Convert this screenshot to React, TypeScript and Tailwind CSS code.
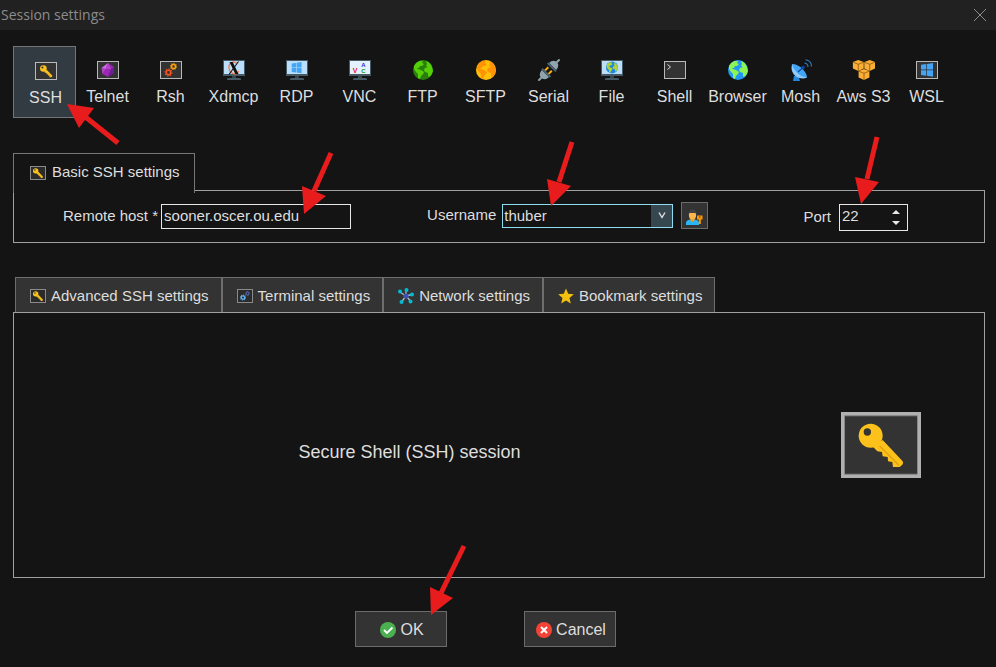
import { useState } from "react";
import type { ReactNode } from "react";

const KeyShape = () => (
  <>
    <circle cx="89" cy="71" r="36" fill="#fcc21b" />
    <path
      d="M125 84 185 148Q188 153 184 158L176 165H156L154 150 141 148 140 135 125 133 123 120 109 118 97 106Z"
      fill="#fcc21b"
    />
    <path d="M116 102 174 160" stroke="#e2a610" strokeWidth="5" />
    <circle cx="79" cy="60" r="11" fill="#333" />
  </>
);

const Frame = () => (
  <rect x="0.5" y="2.5" width="21" height="17" fill="#333" stroke="#b9b9b9" />
);

const Gear = ({
  x,
  y,
  r,
  color,
}: {
  x: number;
  y: number;
  r: number;
  color: string;
}) => (
  <g fill="none" stroke={color}>
    <circle cx={x} cy={y} r={r * 0.62} strokeWidth={r * 0.45} />
    <circle
      cx={x}
      cy={y}
      r={r * 0.9}
      strokeWidth={r * 0.4}
      pathLength={16}
      strokeDasharray="1 1"
    />
  </g>
);

const Monitor = ({ children }: { children: ReactNode }) => (
  <>
    <rect y="1" width="22" height="16" fill="#455a64" />
    <rect x="1" y="2" width="20" height="13" fill="#bbdefb" />
    <path d="M9 17h4v2h-4z" fill="#37474f" />
    <path d="M4 21v-1q0-1 2-1h10q2 0 2 1v1z" fill="#455a64" />
    {children}
  </>
);

const Globe = ({ sea, land }: { sea: string; land: string }) => (
  <>
    <circle cx="11" cy="11" r="10" fill={sea} />
    <path
      d="M2 7Q4 3 8 2L11 2 10 4 12 5 10 7 8 7 7 9 5 9 6 10 9 11 12 13 11 15 9 17 8 20 6 19 6 15 4 13 2 10Z"
      fill={land}
    />
    <path
      d="M14 2Q18 3 20 8L21 12Q20 16 17 18L16 17 16 14 13 13 12 11 13 9 16 8 14 7 15 5Z"
      fill={land}
    />
  </>
);

const WindowsLogo = () => (
  <g fill="#42a5f5">
    <path d="M5 5.8 10.3 5v5.500H5zM11 4.900 17 4v6.500H11zM5 11.200H10.300v5.500L5 16zM11 11.200h6V17.700L11 16.800z" />
  </g>
);

const Cube = ({ x, y }: { x: number; y: number }) => (
  <g transform={`translate(${x} ${y})`}>
    <path d="M0-5.600 5.400-3.400V3L0 5.600-5.400 3V-3.400Z" fill="#faae35" />
    <path
      d="M-5-3.200 0-1.200 5-3.200M0-1.200V5.500"
      fill="none"
      stroke="#7a4a08"
      strokeWidth="0.7"
    />
  </g>
);

const sessions: { name: string; icon: ReactNode }[] = [
  {
    name: "SSH",
    icon: (
      <>
        <Frame />
        <g transform="translate(0.2 2) scale(0.092)">
          <KeyShape />
        </g>
      </>
    ),
  },
  {
    name: "Telnet",
    icon: (
      <>
        <Frame />
        <path d="M11 4 17 8 16.500 14 11 18 5.500 15 4.500 9Z" fill="#9c27b0" />
        <path d="M11 4 4.500 9 8.500 10Z" fill="#ce6fe0" />
        <path d="M8.500 10 4.500 9 5.500 15Z" fill="#ab47bc" />
        <path d="M11 4 8.500 10 14 10Z" fill="#b445cb" />
        <path d="M14 10 17 8 16.500 14 11 18Z" fill="#6a1b9a" />
      </>
    ),
  },
  {
    name: "Rsh",
    icon: (
      <>
        <Frame />
        <Gear x={8.5} y={13.500} r={3.6} color="#f4511e" />
        <Gear x={13.500} y={7.500} r={3.2} color="#ff9f0a" />
      </>
    ),
  },
  {
    name: "Xdmcp",
    icon: (
      <Monitor>
        <ellipse
          cx="11"
          cy="9"
          rx="6"
          ry="5"
          fill="none"
          stroke="#f47c48"
          strokeWidth="1.4"
          strokeDasharray="22 8"
          transform="rotate(70 11 9)"
        />
        <path d="M6.500 3h3.200L15.500 15h-3.200z" fill="#111" />
        <path d="M15.500 2.500 6 15.500" stroke="#111" strokeWidth="1.1" />
      </Monitor>
    ),
  },
  {
    name: "RDP",
    icon: (
      <Monitor>
        <g transform="translate(1.600 -0.200) scale(0.82)">
          <WindowsLogo />
        </g>
      </Monitor>
    ),
  },
  {
    name: "VNC",
    icon: (
      <Monitor>
        <rect x="1" y="2" width="20" height="13" fill="#e3f2fd" />
        <g
          fontFamily="Liberation Sans, sans-serif"
          fontWeight="bold"
          fontSize="7"
          textAnchor="middle"
        >
          <text x="6" y="14" fill="#f01818">
            V
          </text>
          <text x="14.500" y="7.500" fontSize="6" fill="#2828d8">
            A
          </text>
          <text x="14.500" y="14" fontSize="6" fill="#0a9a20">
            C
          </text>
        </g>
      </Monitor>
    ),
  },
  { name: "FTP", icon: <Globe sea="#2a7f0c" land="#55cf08" /> },
  { name: "SFTP", icon: <Globe sea="#ffc107" land="#ff9305" /> },
  {
    name: "Serial",
    icon: (
      <g transform="rotate(-45 11 11)">
        <path
          d="M-4 10H0Q1 6 6 6V16Q1 16 0 12H-4ZM26 10H22Q21 6 16 6V16Q21 16 22 12H26Z"
          fill="#90a4ae"
        />
        <path d="M6 5h2v12H6zM14 5h2v12h-2z" fill="#4a6572" />
        <path d="M8 7.500h4.500v2H8zM8 12.500h4.500v2H8z" fill="#ffb300" />
      </g>
    ),
  },
  {
    name: "File",
    icon: (
      <Monitor>
        <g transform="translate(4.400 2) scale(0.6)">
          <Globe sea="#1e88e5" land="#b5d334" />
        </g>
      </Monitor>
    ),
  },
  {
    name: "Shell",
    icon: (
      <>
        <Frame />
        <path d="m3.500 5.500 3 2.500-3 2.500" fill="none" stroke="#ddd" />
      </>
    ),
  },
  { name: "Browser", icon: <Globe sea="#2196f3" land="#8df456" /> },
  {
    name: "Mosh",
    icon: (
      <>
        <path d="M3 22 4 17 8 16 10 22Z" fill="#2489dc" />
        <path d="M2 5Q0 13 6 17.500 12 21 17 18.500Z" fill="#90caf9" />
        <path d="M2 5Q8 5 13 10.500 17 15 17 18.500 11 18 6.500 13 2.500 9 2 5Z" fill="#42a5f5" />
        <path d="M8 13 13 8.500" stroke="#0d47a1" strokeWidth="1.2" />
        <circle cx="13" cy="8.500" r="1.800" fill="#0d47a1" />
        <path
          d="M14.500 4Q18 4.500 18 8M15.500 0.800Q21.500 1.500 21.500 7.500"
          fill="none"
          stroke="#2c7fc4"
          strokeWidth="1.1"
        />
      </>
    ),
  },
  {
    name: "Aws S3",
    icon: (
      <>
        <Cube x={5.300} y={6.500} />
        <Cube x={16.700} y={6.500} />
        <Cube x={11} y={15.500} />
      </>
    ),
  },
  {
    name: "WSL",
    icon: (
      <>
        <Frame />
        <WindowsLogo />
      </>
    ),
  },
];

const SmallFrame = ({ children }: { children: ReactNode }) => (
  <svg width="16" height="14" viewBox="0 0 16 14" aria-hidden="true">
    <rect x="0.5" y="0.5" width="15" height="13" fill="#2b2b2b" stroke="#8a8a8a" />
    {children}
  </svg>
);

const KeyIcon = () => (
  <SmallFrame>
    <g transform="translate(-1 -0.500) scale(0.075)">
      <KeyShape />
    </g>
  </SmallFrame>
);

const tabs: { name: string; icon: ReactNode }[] = [
  { name: "Advanced SSH settings", icon: <KeyIcon /> },
  {
    name: "Terminal settings",
    icon: (
      <SmallFrame>
        <Gear x={6} y={8.500} r={2.8} color="#64b5f6" />
        <Gear x={10.500} y={4.500} r={2.2} color="#5c6bc0" />
      </SmallFrame>
    ),
  },
  {
    name: "Network settings",
    icon: (
      <svg width="16" height="16" viewBox="0 0 16 16" aria-hidden="true">
        <path
          d="M8 8V2M8 8 2 4M8 8l6-1.500M8 8l-4.500 6M8 8l4.500 5"
          stroke="#b0bec5"
          strokeWidth="1.300"
        />
        <g fill="#00bcd4">
          <circle cx="8.500" cy="2" r="2" />
          <circle cx="2" cy="3.500" r="2" />
          <circle cx="14" cy="6.500" r="2" />
          <circle cx="3.500" cy="14" r="2" />
          <circle cx="12.500" cy="13.500" r="2" />
        </g>
        <circle cx="8" cy="8" r="2.600" fill="#3f51b5" />
      </svg>
    ),
  },
  {
    name: "Bookmark settings",
    icon: (
      <svg width="16" height="16" viewBox="0 0 16 16" aria-hidden="true">
        <path
          d="m8 0.500 2.200 5.200 5.600.5-4.300 3.700 1.300 5.600L8 12.500l-4.800 3 1.300-5.600L.2 6.200l5.600-.5z"
          fill="#f4c20d"
        />
      </svg>
    ),
  },
];

const Arrow = ({
  head,
  tail,
  className,
}: {
  head: string;
  tail: string;
  className: string;
}) => (
  <svg
    width="56"
    height="72"
    viewBox="0 0 56 72"
    aria-hidden="true"
    className={`pointer-events-none absolute z-20 ${className}`}
  >
    <path d={tail} stroke="#e81c1c" strokeWidth="5" />
    <path d={head} fill="#e81c1c" />
  </svg>
);

export default function App() {
  const [session, setSession] = useState("SSH");
  const [port, setPort] = useState(22);

  return (
    <div className="min-h-screen bg-[#141414] font-['Liberation_Sans',Arial,sans-serif] text-base text-[#dedede]">
      <header className="flex h-[30px] items-center justify-between bg-[#212121] pr-2.5 pl-px">
        <h1 className="font-['Open_Sans',sans-serif] text-sm text-[#8c8c8c]">
          Session settings
        </h1>
        <button type="button" aria-label="Close">
          <svg width="12" height="12" viewBox="0 0 12 12">
            <path d="m0 0 12 12M12 0 0 12" stroke="#8c8c8c" />
          </svg>
        </button>
      </header>

      <main className="pt-4 pr-[11px] pb-5 pl-[13px]">
        <nav className="relative flex">
          {sessions.map(({ name, icon }) => (
            <button
              key={name}
              type="button"
              onClick={() => setSession(name)}
              className={`flex h-[72px] w-[63px] flex-col items-center gap-1.5 border leading-5 whitespace-nowrap ${
                session === name
                  ? "border-[#757575] bg-[#323a42] pt-[13px] pl-0.5"
                  : "border-transparent pt-3"
              }`}
            >
              <svg
                width="23"
                height="22"
                viewBox="-1 0 23 22"
                aria-hidden="true"
                className="shrink-0"
              >
                {icon}
              </svg>
              {name}
            </button>
          ))}
          <Arrow
            className="top-[54px] left-[52px]"
            head="M2 4 29 8 14 28Z"
            tail="M18 15 53 43"
          />
        </nav>

        <section className="mt-[35px]">
          <h2 className="relative z-10 mb-[-3px] flex h-10 w-fit items-center gap-1.5 border border-b-0 border-[#767676] bg-[#141414] pr-3.5 pb-0.5 pl-4 text-[15px]">
            <KeyIcon />
            Basic SSH settings
          </h2>
          <div className="flex h-[53px] items-center border border-[#a0a0a0] pr-[76px] pl-[49px] text-[15px]">
            <div className="relative flex items-center gap-[3px]">
              <label htmlFor="host">Remote host *</label>
              <input
                id="host"
                defaultValue="sooner.oscer.ou.edu"
                className="h-[25px] w-[190px] border border-[#e8e8e8] bg-transparent px-0.5 pb-0.5 outline-none"
              />
              <Arrow
                className="-top-14 left-[232px]"
                head="M9 66 7 38 31 48Z"
                tail="M19 43 36 5"
              />
            </div>
            <div className="relative ml-[76px] flex items-center gap-2 pb-0.5">
              <label htmlFor="username">Username</label>
              <div className="relative -ml-0.5 flex">
                <select
                  id="username"
                  className="h-6 w-[171px] appearance-none border border-[#8fdcf0] bg-transparent pl-px outline-none"
                >
                  <option>thuber</option>
                </select>
                <span className="pointer-events-none absolute inset-y-px right-px flex w-[21px] items-center justify-center bg-[#37474f]">
                  <svg width="8" height="7" viewBox="0 0 8 7">
                    <path
                      d="m1 0.500 3 5 3-5"
                      fill="none"
                      stroke="#e0e0e0"
                      strokeWidth="1.400"
                    />
                  </svg>
                </span>
              </div>
              <button
                type="button"
                aria-label="Manage credentials"
                className="flex size-[27px] items-center justify-center border border-[#6b6b6b] bg-[#333] pt-0.5"
              >
                <svg width="17" height="16" viewBox="0 0 17 16">
                  <path d="M0 16v-2q0-3 4-3.500h5q4 .5 4 3.500v2z" fill="#29b6f6" />
                  <path d="M4.500 9h4v2.500l-2 1.500-2-1.500z" fill="#ff9800" />
                  <ellipse cx="6.500" cy="6" rx="3.600" ry="4.500" fill="#ffb74d" />
                  <path d="M2.500 6Q2 .5 6.500.5T10.500 6L9.500 4H3.500z" fill="#424242" />
                  <path
                    d="M11 6.500h5.500v4h-1.700V15h-2v-4.500H11zM13 7.500v1h1.500v-1z"
                    fill="#ff9800"
                    fillRule="evenodd"
                  />
                </svg>
              </button>
              <Arrow
                className="-top-16 left-[112px]"
                head="M12 68 8 41 32 48Z"
                tail="M20 44 33 4"
              />
            </div>
            <div className="relative ml-auto flex items-center gap-2 pt-0.5">
              <label htmlFor="port">Port</label>
              <div className="flex h-[27px] w-[69px] items-center border border-[#e8e8e8] pr-[7px]">
                <input
                  id="port"
                  inputMode="numeric"
                  value={port}
                  onChange={(e) => setPort(Number(e.target.value) || 0)}
                  className="min-w-0 flex-1 bg-transparent px-0.5 pb-0.5 outline-none"
                />
                <div className="flex flex-col gap-[7px]">
                  <button
                    type="button"
                    aria-label="Increase port"
                    onClick={() => setPort(port + 1)}
                  >
                    <svg width="8" height="4" viewBox="0 0 8 4" className="block">
                      <path d="M0 4 4 0 8 4Z" fill="#e8e8e8" />
                    </svg>
                  </button>
                  <button
                    type="button"
                    aria-label="Decrease port"
                    onClick={() => setPort(port - 1)}
                  >
                    <svg width="8" height="4" viewBox="0 0 8 4" className="block">
                      <path d="M0 0 4 4 8 0Z" fill="#e8e8e8" />
                    </svg>
                  </button>
                </div>
              </div>
              <Arrow
                className="right-5 bottom-[26px]"
                head="M29 71 23 44 47 49Z"
                tail="M35 46 45 4"
              />
            </div>
          </div>
        </section>

        <section className="mt-[34px]">
          <div className="flex pl-0.5">
            {tabs.map(({ name, icon }) => (
              <button
                key={name}
                type="button"
                className="flex h-[35px] items-center gap-[5px] border border-b-0 border-[#6e6e6e] bg-[#333] pt-0.5 pr-3 pl-3.5 text-[15px]"
              >
                {icon}
                {name}
              </button>
            ))}
          </div>
          <div className="flex h-[266px] items-center border border-[#a0a0a0] pr-[63px]">
            <p className="flex-1 pt-3.5 text-center text-lg">
              Secure Shell (SSH) session
            </p>
            <svg
              width="80"
              height="66"
              viewBox="0 0 240 198"
              aria-hidden="true"
              className="ml-9"
            >
              <rect width="240" height="198" fill="#b0b0b0" />
              <rect x="10" y="10" width="220" height="178" fill="#777" />
              <rect x="12" y="13" width="216" height="172" fill="#333" />
              <KeyShape />
            </svg>
          </div>
        </section>

        <footer className="mt-[33px] flex justify-center gap-[77px] pr-[27px]">
          <div className="relative">
            <button
              type="button"
              className="flex h-9 w-[92px] items-center justify-center gap-1 border border-[#6b6b6b] bg-[#333] pt-0.5 pl-0.5"
            >
              <svg width="16" height="16" viewBox="0 0 16 16" aria-hidden="true">
                <circle cx="8" cy="8" r="8" fill="#4caf50" />
                <path
                  d="m4 8 3 3 5.500-5.500"
                  fill="none"
                  stroke="#fff"
                  strokeWidth="1.800"
                />
              </svg>
              OK
            </button>
            <Arrow
              className="bottom-8 left-[66px]"
              head="M10 72 9 44 32 55Z"
              tail="M20 50 43 3"
            />
          </div>
          <button
            type="button"
            className="flex h-9 w-[92px] items-center justify-center gap-1 border border-[#6b6b6b] bg-[#333] pt-0.5 pl-0.5"
          >
            <svg width="16" height="16" viewBox="0 0 16 16" aria-hidden="true">
              <circle cx="8" cy="8" r="8" fill="#f44336" />
              <path d="m5 5 6 6M11 5l-6 6" stroke="#fff" strokeWidth="2" />
            </svg>
            Cancel
          </button>
        </footer>
      </main>
    </div>
  );
}
